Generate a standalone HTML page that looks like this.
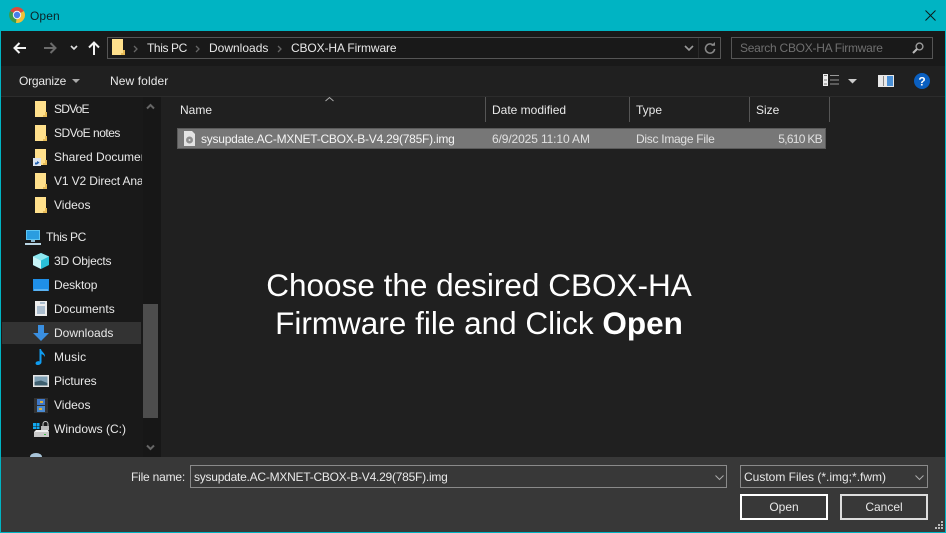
<!DOCTYPE html>
<html><head><meta charset="utf-8"><style>
html,body{margin:0;padding:0;width:946px;height:533px;overflow:hidden;background:#202020}
body{position:relative;font-family:"Liberation Sans",sans-serif;font-size:12px;color:#e8e8e8}
.a{position:absolute}
.t{position:absolute;white-space:nowrap;line-height:16px;height:16px}
svg{position:absolute;overflow:visible}
</style></head><body>
<div class="a" style="left:0;top:0;width:946px;height:31px;background:#00b4c3"></div>
<div class="a" style="left:0;top:31px;width:1px;height:502px;background:#00b4c3"></div>
<div class="a" style="left:945px;top:31px;width:1px;height:502px;background:#00b4c3"></div>
<div class="a" style="left:0;top:532px;width:946px;height:1px;background:#00b4c3"></div>
<div class="a" style="left:1px;top:31px;width:944px;height:35px;background:#191919"></div>
<div class="a" style="left:1px;top:66px;width:944px;height:30px;background:#202020"></div>
<div class="a" style="left:1px;top:96px;width:944px;height:1px;background:#2c2c2c"></div>
<div class="a" style="left:1px;top:97px;width:142px;height:360px;background:#191919"></div>
<div class="a" style="left:143px;top:97px;width:15px;height:360px;background:#171717"></div>
<div class="a" style="left:158px;top:97px;width:3px;height:360px;background:#171717"></div>
<div class="a" style="left:161px;top:97px;width:784px;height:360px;background:#202020"></div>
<div class="a" style="left:1px;top:457px;width:944px;height:75px;background:#383838"></div>

<!-- chrome icon -->
<svg style="left:9px;top:7px" width="16" height="16" viewBox="0 0 16 16"><path d="M8 8L1.100 4A8 8 0 0 1 14.900 4Z" fill="#dc4a3c"/><path d="M8 8L1.100 4A8 8 0 0 0 7 15.940Z" fill="#3a9d4a"/><path d="M8 8L14.900 4A8 8 0 0 1 7 15.940Z" fill="#f2c037"/><circle cx="8" cy="8" r="4.200" fill="#f4f4f4"/><circle cx="8" cy="8" r="3.200" fill="#4a80e8"/></svg>
<div class="t" style="left:30px;top:8px;color:#0c2326;letter-spacing:.1px">Open</div>
<svg style="left:925px;top:10px" width="11" height="11"><path d="M.5.5L10.500 10.500M10.500.5L.5 10.500" stroke="#0b1b1d" fill="none"/></svg>

<!-- nav -->
<svg style="left:13px;top:41px" width="14" height="14"><path d="M1.500 7H13M6.500 2L1.500 7L6.500 12" stroke="#f2f2f2" stroke-width="2" fill="none"/></svg>
<svg style="left:43px;top:41px" width="14" height="14"><path d="M12.500 7H1M7.500 2L12.500 7L7.500 12" stroke="#6b6b6b" stroke-width="2" fill="none"/></svg>
<svg style="left:70px;top:45px" width="8" height="6"><path d="M1 1L4 4L7 1" stroke="#e0e0e0" stroke-width="1.600" fill="none"/></svg>
<svg style="left:87px;top:41px" width="14" height="14"><path d="M7 14V1.500M2 6.500L7 1.500L12 6.500" stroke="#f2f2f2" stroke-width="2" fill="none"/></svg>
<div class="a" style="left:107px;top:37px;width:612px;height:20px;border:1px solid #555;background:#191919"></div>
<svg style="left:112px;top:39px" width="13" height="16"><path d="M0 0H11V16H0Z" fill="#ffe08c"/><path d="M11 11H13V16H11Z" fill="#e8bc58"/><path d="M9 14H11V16H9Z" fill="#e8bc58"/></svg>
<svg style="left:133px;top:45px" width="5" height="8"><path d="M1 1L4 4L1 7" stroke="#666" stroke-width="1.300" fill="none"/></svg>
<div class="t" style="left:147px;top:40px;letter-spacing:-.4px">This PC</div>
<svg style="left:195px;top:45px" width="5" height="8"><path d="M1 1L4 4L1 7" stroke="#666" stroke-width="1.300" fill="none"/></svg>
<div class="t" style="left:209px;top:40px">Downloads</div>
<svg style="left:277px;top:45px" width="5" height="8"><path d="M1 1L4 4L1 7" stroke="#666" stroke-width="1.300" fill="none"/></svg>
<div class="t" style="left:291px;top:40px;letter-spacing:-.12px">CBOX-HA Firmware</div>
<svg style="left:684px;top:45px" width="10" height="7"><path d="M1 1L5 5L9 1" stroke="#999" stroke-width="1.600" fill="none"/></svg>
<div class="a" style="left:698px;top:38px;width:1px;height:20px;background:#2b2b2b"></div>
<svg style="left:704px;top:42px" width="12" height="13"><path d="M9.500 3.500A4.600 4.600 0 1 0 10.600 7" stroke="#888" stroke-width="1.500" fill="none"/><path d="M7 3.800H11V0Z" fill="#888"/></svg>
<div class="a" style="left:731px;top:37px;width:200px;height:20px;border:1px solid #555;background:#191919"></div>
<div class="t" style="left:740px;top:40px;color:#6f6f6f;letter-spacing:-.26px">Search CBOX-HA Firmware</div>
<svg style="left:912px;top:42px" width="12" height="12"><circle cx="7.500" cy="4.500" r="3.400" stroke="#999" stroke-width="1.400" fill="none"/><path d="M5 7L1 11" stroke="#bbb" stroke-width="2"/></svg>

<!-- toolbar -->
<div class="t" style="left:19px;top:73px;letter-spacing:-.2px">Organize</div>
<svg style="left:72px;top:79px" width="8" height="5"><path d="M0 0H8L4 4Z" fill="#aaa"/></svg>
<div class="t" style="left:110px;top:73px;letter-spacing:.1px">New folder</div>
<svg style="left:823px;top:74px" width="16" height="13"><path d="M0 0h5v12H0z" fill="#eee"/><path d="M1 1.500h3M1 6h3M1 10h3" stroke="#777"/><path d="M7 1.500h9M7 6h9M7 10h9" stroke="#999"/></svg>
<svg style="left:848px;top:79px" width="9" height="5"><path d="M0 0H9L4.500 4.500Z" fill="#ccc"/></svg>
<svg style="left:878px;top:75px" width="16" height="12"><path d="M0 0h16v12H0z" fill="#e8e8e8"/><path d="M5 1h1v10H5z" fill="#888"/><path d="M9 1h6v10H9z" fill="#4a90d6"/></svg>
<svg style="left:914px;top:73px" width="16" height="16"><circle cx="8" cy="8" r="8" fill="#0a5fc0"/><text x="8" y="12.500" text-anchor="middle" fill="#fff" font-size="12" font-weight="bold" font-family="Liberation Sans">?</text></svg>

<!-- sidebar -->
<svg width="0" height="0"><defs><symbol id="f" viewBox="0 0 12 16"><path d="M0 0H11V16H0Z" fill="#ffe08c"/><path d="M10 11H12V16H10Z" fill="#e8bc58"/><path d="M8 14H10V16H8Z" fill="#e8bc58"/></symbol></defs></svg>
<svg style="left:35px;top:101px" width="12" height="16"><use href="#f"/></svg>
<div class="t" style="left:54px;top:101px;letter-spacing:-.8px">SDVoE</div>
<svg style="left:35px;top:125px" width="12" height="16"><use href="#f"/></svg>
<div class="t" style="left:54px;top:125px;letter-spacing:-.5px">SDVoE notes</div>
<svg style="left:35px;top:149px" width="12" height="16"><use href="#f"/></svg>
<svg style="left:33px;top:158px" width="8" height="8"><path d="M0 0H8V8H0Z" fill="#dbe4f0"/><path d="M2 6.500V4.500H4V3L6.500 4.500L4 6.500Z" fill="#1f5fb0"/></svg>
<div class="t" style="left:54px;top:149px;width:88px;overflow:hidden">Shared Documents</div>
<svg style="left:35px;top:173px" width="12" height="16"><use href="#f"/></svg>
<div class="t" style="left:54px;top:173px;width:88px;overflow:hidden;letter-spacing:-.12px">V1 V2 Direct Analog</div>
<svg style="left:35px;top:197px" width="12" height="16"><use href="#f"/></svg>
<div class="t" style="left:54px;top:197px">Videos</div>

<svg style="left:25px;top:230px" width="16" height="15"><path d="M1 0H15V10H1Z" fill="#5cc4f2"/><path d="M2 1H14V9H2Z" fill="#2a9de0"/><path d="M6 10H10V12H6Z" fill="#8fb9d0"/><path d="M0 13H16V15H0Z" fill="#b9d4e2"/></svg>
<div class="t" style="left:46px;top:229px;letter-spacing:-.4px">This PC</div>
<svg style="left:33px;top:253px" width="16" height="16"><path d="M8 0L16 3.500V12L8 16L0 12V3.500Z" fill="#2ac0d8"/><path d="M0 3.500L8 7.500L16 3.500L8 0Z" fill="#8ee8f0"/><path d="M0 3.500L8 7.500V16L0 12Z" fill="#c8f4f8"/></svg>
<div class="t" style="left:54px;top:253px;letter-spacing:-.2px">3D Objects</div>
<svg style="left:33px;top:279px" width="16" height="12"><path d="M0 0H16V12H0Z" fill="#1f8fe8"/><path d="M1 11H15" stroke="#9ad4fa"/></svg>
<div class="t" style="left:54px;top:277px;letter-spacing:-.1px">Desktop</div>
<svg style="left:35px;top:301px" width="12" height="15"><path d="M0 0H12V15H0Z" fill="#eee"/><path d="M5 2h5M2 6h8M2 8h8M2 10h8M2 12h8" stroke="#6a8fb0"/></svg>
<div class="t" style="left:54px;top:301px">Documents</div>
<div class="a" style="left:2px;top:322px;width:139px;height:22px;background:#333"></div>
<svg style="left:33px;top:325px" width="16" height="16"><path d="M5 0H11V8H16L8 16L0 8H5Z" fill="#3a8fe0"/></svg>
<div class="t" style="left:54px;top:325px">Downloads</div>
<svg style="left:35px;top:349px" width="11" height="16"><path d="M4.500 0H6C6.300 3 10.500 4 10 8C9 6 7.500 5.500 6.500 5V13C6.500 15 4.500 16 2.500 16C0 16 0 13 2 12.500C3 12 4 12 4.500 12.500Z" fill="#0f9cf0"/></svg>
<div class="t" style="left:54px;top:349px;letter-spacing:.2px">Music</div>
<svg style="left:33px;top:375px" width="16" height="12"><path d="M0 0H16V12H0Z" fill="#e6e6e6"/><path d="M1.500 1.500H14.500V10.500H1.500Z" fill="#7fa0b4"/><path d="M1.500 7L8 5.500L14.500 8V10.500H1.500Z" fill="#3f6070"/></svg>
<div class="t" style="left:54px;top:373px;letter-spacing:-.1px">Pictures</div>
<svg style="left:34px;top:398px" width="14" height="15"><path d="M0 0H14V15H0Z" fill="#333"/><path d="M3 1H11V7H3Z" fill="#3f78c8"/><path d="M3 8H11V14H3Z" fill="#4a8ad0"/><path d="M6 3h3v2H6zM5 10h3v2H5z" fill="#d8b040"/></svg>
<div class="t" style="left:54px;top:397px">Videos</div>
<svg style="left:33px;top:421px" width="16" height="16"><path d="M0 2H3V5H0ZM3.500 2H6.500V5H3.500ZM0 5.500H3V8H0ZM3.500 5.500H6.500V8H3.500Z" fill="#11a8f0"/><path d="M10 5V3A2.500 2.500 0 0 1 15 3V5" stroke="#ccc" fill="none"/><path d="M8 5H16V9H8Z" fill="#bbb"/><path d="M1 11H16V16H1Z" fill="#c8c8c8"/><path d="M3 9H15L16 11H1Z" fill="#eee"/><path d="M11 13h2v1h-2z" fill="#35c040"/></svg>
<div class="t" style="left:54px;top:421px">Windows (C:)</div>
<svg style="left:30px;top:453px" width="12" height="4"><path d="M0 4A6 4 0 0 1 12 4Z" fill="#a8c4d8"/></svg>

<!-- scrollbar -->
<svg style="left:146px;top:103px" width="9" height="7"><path d="M1 5.500L4.500 2L8 5.500" stroke="#666" stroke-width="2" fill="none"/></svg>
<div class="a" style="left:143px;top:304px;width:15px;height:114px;background:#4d4d4d"></div>
<svg style="left:146px;top:444px" width="9" height="7"><path d="M1 1.500L4.500 5L8 1.500" stroke="#666" stroke-width="2" fill="none"/></svg>

<!-- headers -->
<svg style="left:325px;top:97px" width="9" height="5"><path d="M.5 4L4.500 .5L8.500 4" stroke="#aaa" fill="none"/></svg>
<div class="t" style="left:180px;top:102px">Name</div>
<div class="a" style="left:485px;top:97px;width:1px;height:25px;background:#555"></div>
<div class="t" style="left:492px;top:102px">Date modified</div>
<div class="a" style="left:629px;top:97px;width:1px;height:25px;background:#555"></div>
<div class="t" style="left:636px;top:102px">Type</div>
<div class="a" style="left:749px;top:97px;width:1px;height:25px;background:#555"></div>
<div class="t" style="left:756px;top:102px">Size</div>
<div class="a" style="left:829px;top:97px;width:1px;height:25px;background:#555"></div>

<!-- row -->
<div class="a" style="left:177px;top:128px;width:647px;height:19px;border:1px solid #5a5a5a;background:#777"></div>
<svg style="left:184px;top:131px" width="11" height="15"><path d="M0 0H8L11 3V15H0Z" fill="#e4e4e4"/><circle cx="5.500" cy="9" r="3.500" fill="#8f8f8f"/><circle cx="5.500" cy="9" r="1" fill="#ddd"/></svg>
<div class="t" style="left:201px;top:131px;color:#f4f4f4;letter-spacing:-.24px">sysupdate.AC-MXNET-CBOX-B-V4.29(785F).img</div>
<div class="t" style="left:492px;top:131px;color:#e0e0e0;letter-spacing:-.12px">6/9/2025 11:10 AM</div>
<div class="t" style="left:636px;top:131px;color:#e0e0e0;letter-spacing:-.28px">Disc Image File</div>
<div class="t" style="left:722px;top:131px;width:100px;text-align:right;color:#e0e0e0;letter-spacing:-.7px">5,610 KB</div>

<!-- caption -->
<div class="a" style="left:161px;top:267px;width:636px;text-align:center;color:#fff;font-size:31.500px;line-height:37.500px">Choose the desired CBOX-HA<br>Firmware file and Click <b>Open</b></div>

<!-- bottom -->
<div class="t" style="left:131px;top:469px;letter-spacing:-.2px">File name:</div>
<div class="a" style="left:190px;top:465px;width:535px;height:21px;border:1px solid #8a8a8a;background:#383838"></div>
<div class="t" style="left:194px;top:469px;letter-spacing:-.24px">sysupdate.AC-MXNET-CBOX-B-V4.29(785F).img</div>
<svg style="left:715px;top:475px" width="9" height="6"><path d="M.5 .5L4.500 4.500L8.500 .5" stroke="#aaa" fill="none"/></svg>
<div class="a" style="left:740px;top:465px;width:186px;height:21px;border:1px solid #8a8a8a;background:#383838"></div>
<div class="t" style="left:744px;top:469px">Custom Files (*.img;*.fwm)</div>
<svg style="left:915px;top:475px" width="9" height="6"><path d="M.5 .5L4.500 4.500L8.500 .5" stroke="#aaa" fill="none"/></svg>
<div class="a" style="left:740px;top:494px;width:84px;height:22px;border:2px solid #fff;background:#383838"></div>
<div class="t" style="left:740px;top:499px;width:88px;text-align:center">Open</div>
<div class="a" style="left:840px;top:494px;width:84px;height:22px;border:2px solid #ddd;background:#383838"></div>
<div class="t" style="left:840px;top:499px;width:88px;text-align:center">Cancel</div>
<svg style="left:934px;top:521px" width="10" height="10"><path d="M7 0h2v2H7zM4 3h2v2H4zM7 3h2v2H7zM1 6h2v2H1zM4 6h2v2H4zM7 6h2v2H7z" fill="#bbb"/></svg>
</body></html>
